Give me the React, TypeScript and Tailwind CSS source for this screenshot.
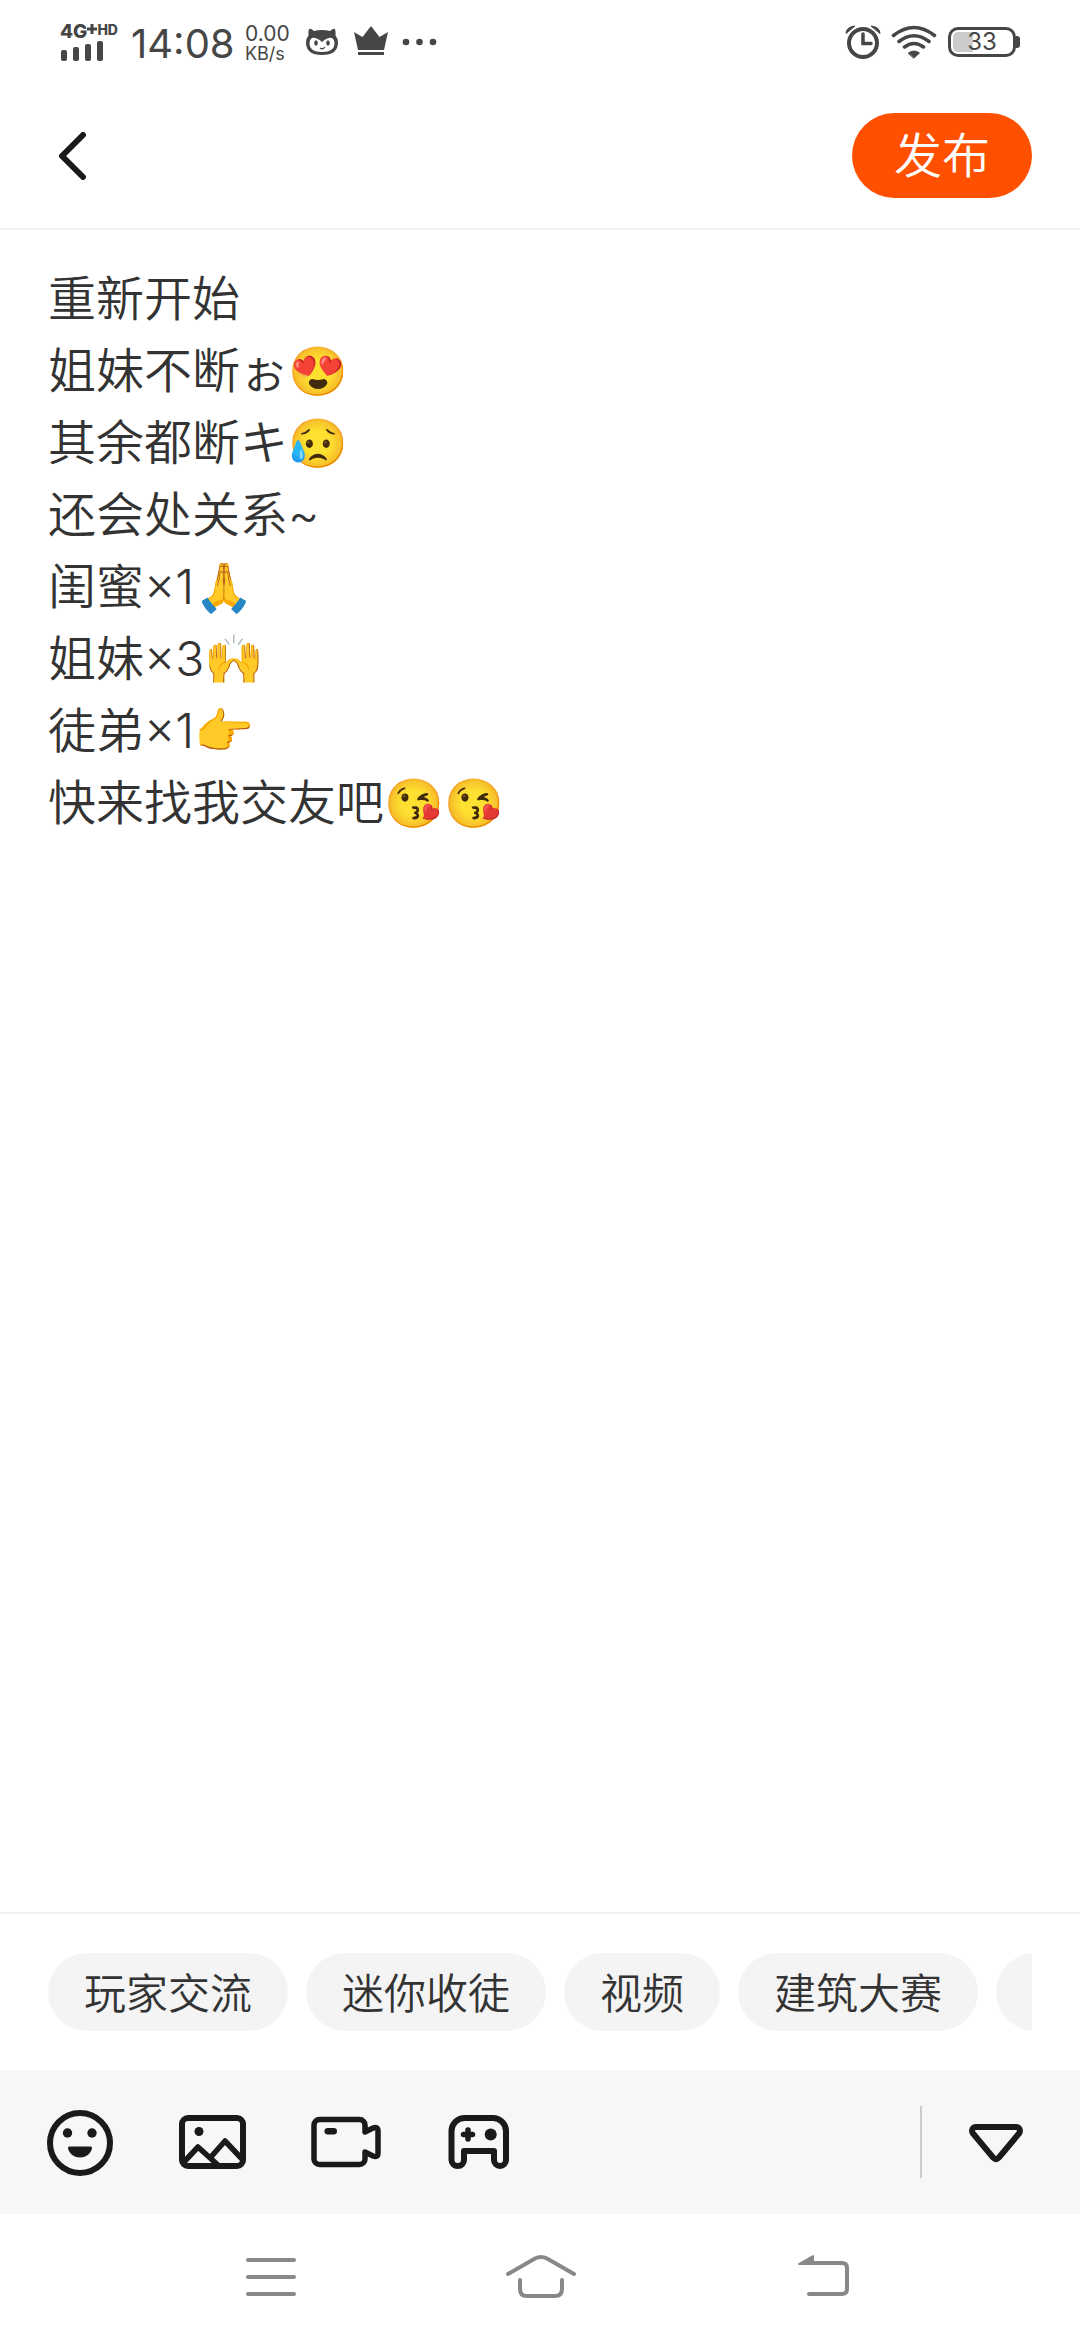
import { useState } from "react";

const DRAFT = [
  "重新开始",
  "姐妹不断ぉ😍",
  "其余都断キ😥",
  "还会处关系~",
  "闺蜜×1🙏",
  "姐妹×3🙌",
  "徒弟×1👉",
  "快来找我交友吧😘😘",
].join("\n");

const TOPICS = ["玩家交流", "迷你收徒", "视频", "建筑大赛"];

function StatusBar() {
  return (
    <div className="flex h-[84px] shrink-0 items-center justify-between pr-[60px] pl-[60px] text-[#464646]">
      <div className="flex items-center">
        <div className="flex w-[60px] flex-col" aria-label="信号">
          <div className="flex items-start font-extrabold">
            <span className="text-[19px] leading-[18px]">4G</span>
            <svg className="h-[12px] w-[10px] shrink-0" viewBox="0 0 10 12" stroke="currentColor" strokeWidth="3">
              <path d="M0 6h10M5 1v10" />
            </svg>
            <span className="text-[14px] leading-[13px]">HD</span>
          </div>
          <svg className="h-[20px] w-[44px]" viewBox="0 0 44 20" fill="currentColor">
            <rect x="1" y="9" width="6" height="11" rx="2" />
            <rect x="13" y="6" width="6" height="14" rx="2" />
            <rect x="25" y="3" width="6" height="17" rx="2" />
            <rect x="37" y="0" width="6" height="20" rx="2" />
          </svg>
        </div>
        <span className="ml-[11px] w-[114px] pt-[4px] text-[40px] leading-[48px]">14:08</span>
        <span className="flex w-[60px] flex-col pt-[2px]">
          <span className="text-[21px] leading-[22px]">0.00</span>
          <span className="text-[18px] leading-[18px]">KB/s</span>
        </span>
        <svg className="h-[34px] w-[34px]" viewBox="0 0 34 34" aria-label="通知">
          <path d="M4 4q1.500-1 5 2 8-2 16 0 3.500-3 5-2 1 3 .5 6.500 2.500 3 2.500 7Q33 30 17 30T1 17.500q0-4 2.500-7Q3 7 4 4z" fill="#464646" />
          <path d="M7 13q4-1 10 4 6-5 10-4 2.500 1.500 2.500 5 0 9-12.500 9T4.500 18q0-3.500 2.500-5z" fill="#fff" />
          <ellipse cx="11" cy="18" rx="1.800" ry="2.800" fill="#464646" />
          <ellipse cx="23" cy="18" rx="1.800" ry="2.800" fill="#464646" />
          <path d="M15 23q3 2 5-1" stroke="#464646" strokeWidth="1.300" fill="none" />
        </svg>
        <svg className="ml-[15px] h-[32px] w-[34px]" viewBox="0 0 34 32" fill="currentColor" aria-label="会员">
          <path d="M0 6l8.500 5L17 0l8.500 11L34 6l-4 18H4zM4 26h26v3H4z" />
        </svg>
        <svg className="ml-[14px] h-[8px] w-[36px]" viewBox="0 0 36 8" fill="currentColor" aria-label="更多通知">
          <circle cx="4" cy="4" r="3.300" />
          <circle cx="17.500" cy="4" r="3.300" />
          <circle cx="31" cy="4" r="3.300" />
        </svg>
      </div>
      <div className="flex items-center">
        <svg className="h-[36px] w-[36px]" viewBox="0 0 36 36" fill="none" stroke="currentColor" aria-label="闹钟">
          <circle cx="18" cy="19" r="14" strokeWidth="4" />
          <path d="M18 10v9.500h8" strokeWidth="3.500" strokeLinecap="round" />
          <path d="M1 9.500Q1 3 10 2L1 9.500zM35 9.500Q35 3 26 2z" fill="currentColor" strokeWidth="1" />
        </svg>
        <svg className="ml-[10px] h-[36px] w-[46px]" viewBox="0 0 46 36" fill="none" stroke="currentColor" strokeWidth="3.600" strokeLinecap="round" aria-label="无线网络">
          <path d="M2.500 11.500Q23-4.500 43.500 11.500M8 17.500q15-11.500 30 0M13.500 23q9.500-7 19 0" />
          <path d="M17.500 29q5.500-4 11 0L23 34z" fill="currentColor" strokeWidth="1" />
        </svg>
        <div className="ml-[11px] flex items-center">
          <div className="flex h-[30px] w-[68px] items-center justify-center rounded-[10px] border-3 border-[#464646] bg-linear-to-r from-[#ccc] from-35% to-white to-35% bg-clip-content p-[2px] text-[24px] leading-[24px]">
            33
          </div>
          <div className="h-[12px] w-[4px] rounded-r-[3px] bg-[#464646]" />
        </div>
      </div>
    </div>
  );
}

function Header() {
  return (
    <header className="flex h-[146px] shrink-0 items-center justify-between border-b-2 border-[#f0f0f0] px-[48px] pb-px">
      <button type="button" aria-label="返回" className="flex h-[72px] w-[48px] items-center">
        <svg className="h-[48px] w-[48px]" viewBox="0 0 48 48" fill="none" stroke="#1a1a1a" strokeWidth="6" strokeLinecap="round" strokeLinejoin="round">
          <path d="M35 3L14 24l21 21" />
        </svg>
      </button>
      <button type="button" className="h-[85px] w-[180px] rounded-full bg-[#ff5000] text-[48px] leading-[72px] font-[350] text-white">
        发布
      </button>
    </header>
  );
}

function Toolbar() {
  const icon = "h-[72px] w-[72px]";
  return (
    <div className="flex h-[144px] shrink-0 items-center justify-between bg-[#f7f7f7] pr-[48px] pl-[44px] text-[#1a1a1a]">
      <div className="flex gap-[61px]">
        <button type="button" aria-label="表情">
          <svg className={icon} viewBox="0 0 72 72" fill="currentColor">
            <circle cx="36" cy="37" r="30" fill="none" stroke="currentColor" strokeWidth="6" />
            <circle cx="23.500" cy="27" r="4.700" />
            <circle cx="48" cy="27" r="4.700" />
            <path d="M25.500 40.500h21q1.800 0 1.500 2a12.200 11 0 0 1-24 0q-.3-2 1.500-2z" />
          </svg>
        </button>
        <button type="button" aria-label="图片">
          <svg className={icon} viewBox="0 0 72 72" fill="none" stroke="currentColor" strokeWidth="6" strokeLinejoin="round">
            <rect x="5" y="12" width="61" height="48" rx="6" />
            <circle cx="22" cy="25.500" r="4.500" fill="currentColor" stroke="none" />
            <path d="M6 57L21 41l21 19M33 52L48 35l18 19" strokeWidth="5.500" />
          </svg>
        </button>
        <button type="button" aria-label="视频">
          <svg className={icon} viewBox="0 0 72 72" fill="none" stroke="currentColor" strokeWidth="6" strokeLinejoin="round">
            <path d="M55 26v-7a5.500 5.500 0 0 0-5.500-5.500h-40A5.500 5.500 0 0 0 4 19v34a5.500 5.500 0 0 0 5.500 5.500h40A5.500 5.500 0 0 0 55 53v-7l8 4q5 2 5-3V25q0-5-5-3z" strokeWidth="5.500" />
            <rect x="14.500" y="22" width="12.500" height="6.500" rx="3.200" fill="currentColor" stroke="none" />
          </svg>
        </button>
        <button type="button" aria-label="游戏">
          <svg className={icon} viewBox="0 0 72 72" fill="none" stroke="currentColor" strokeWidth="6" strokeLinejoin="round">
            <path d="M8.500 25a13 13 0 0 1 13-13H50a13 13 0 0 1 13 13v29a6 6 0 0 1-12 0v-9H21v9a6.200 6 0 0 1-12.500 0z" />
            <path d="M20.500 28.500h9M25 24v9" strokeWidth="5.500" strokeLinecap="round" />
            <circle cx="47.700" cy="28.500" r="6" fill="currentColor" stroke="none" />
          </svg>
        </button>
      </div>
      <div className="flex items-center gap-[38px]">
        <div className="h-[72px] w-[2px] bg-[#ccc]" />
        <button type="button" aria-label="收起">
          <svg className={icon} viewBox="0 0 72 72" fill="none" stroke="currentColor" strokeWidth="6">
            <path d="M16 21h40c3.500 0 5 3.500 3 6.500L39 51.500q-3 3-6 0L13 27.500c-2-3-.5-6.500 3-6.500z" />
          </svg>
        </button>
      </div>
    </div>
  );
}

function NavigationBar() {
  const icon = "h-[48px] w-[80px]";
  return (
    <nav className="flex h-[126px] shrink-0 items-center justify-center gap-[190px] text-[#888]">
      <button type="button" aria-label="最近任务">
        <svg className={icon} viewBox="0 0 80 48" fill="none" stroke="currentColor" strokeWidth="4" strokeLinecap="round">
          <path d="M18 7h46M18 24h46M18 41h46" />
        </svg>
      </button>
      <button type="button" aria-label="主屏幕">
        <svg className={icon} viewBox="0 0 80 48" fill="none" stroke="currentColor" strokeWidth="4" strokeLinecap="round">
          <path d="M8 21L35 5.500q6-3 12 0L74 21M20 27v9q0 7 7 7h28q7 0 7-7v-9" />
        </svg>
      </button>
      <button type="button" aria-label="返回上一页">
        <svg className={icon} viewBox="0 0 80 48" fill="none" stroke="currentColor" strokeWidth="4" strokeLinecap="round">
          <path d="M41 10h31q5 0 5 5v21q0 5-5 5H39" />
          <path d="M43 3v8H29z" fill="currentColor" strokeWidth="2" strokeLinejoin="round" />
        </svg>
      </button>
    </nav>
  );
}

export default function App() {
  const [text, setText] = useState(DRAFT);
  return (
    <div className="flex min-h-screen flex-col bg-white font-['Inter','Noto_Sans_CJK_SC',sans-serif] text-[#333]">
      <StatusBar />
      <Header />
      <textarea
        aria-label="正文"
        value={text}
        onChange={(e) => setText(e.target.value)}
        className="block w-full flex-1 resize-none px-[48px] pt-[33px] text-[48px] leading-[72px] font-[350] outline-none"
      />
      <div className="shrink-0 border-t-2 border-[#f3f3f3] px-[48px] py-[39px]">
        <div className="flex gap-[18px] overflow-hidden">
          {TOPICS.map((topic) => (
            <button key={topic} type="button" className="h-[78px] shrink-0 rounded-full bg-[#f4f4f4] px-[36px] pt-[3px] text-[42px] leading-[60px] font-[350]">
              {topic}
            </button>
          ))}
          <button type="button" aria-label="更多话题" className="h-[78px] w-[156px] shrink-0 rounded-full bg-[#f4f4f4]" />
        </div>
      </div>
      <Toolbar />
      <NavigationBar />
    </div>
  );
}
